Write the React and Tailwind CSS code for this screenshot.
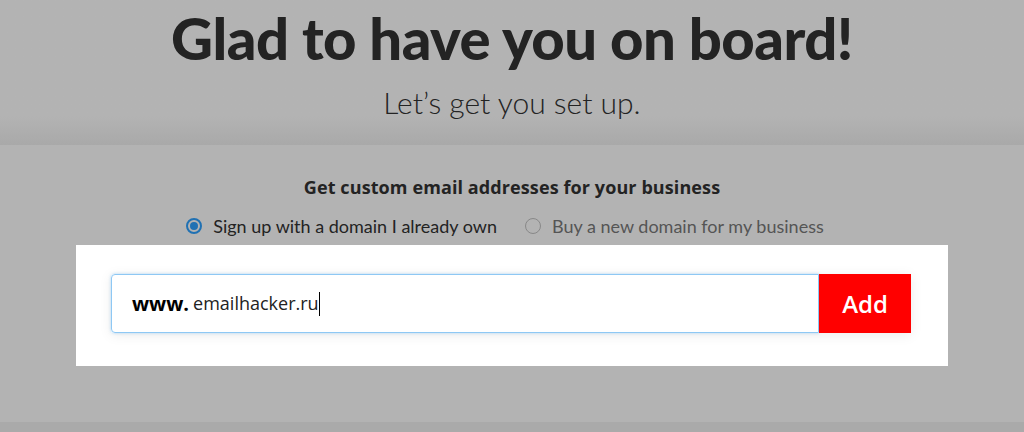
export default function App() {
  return (
    <div className="w-[1024px] h-[432px] overflow-hidden bg-[#b3b3b3] text-[#232323] font-['Lato','Open_Sans',sans-serif]">
      {/* Header */}
      <div className="h-[145px] flex flex-col items-center bg-gradient-to-b from-[#b3b3b3] from-80% to-[#a9a9a9]">
        <h1 className="mt-[6px] text-[58px] leading-[64px] font-black tracking-[-0.5px]">
          Glad to have you on board!
        </h1>
        <p className="mt-[15px] text-[30px] leading-[34px] font-light">
          Let’s get you set up.
        </p>
      </div>

      {/* Form */}
      <div className="h-[277px] flex flex-col items-center">
        <h2 className="mt-[31px] text-[18px] leading-[22px] font-bold font-['Open_Sans',sans-serif] tracking-[0.1px]">
          Get custom email addresses for your business
        </h2>
        <div className="mt-[17px] flex items-center gap-[28px] text-[18px] leading-[22px]">
          <label className="flex items-center gap-[11px] ml-[-14px]">
            <span className="w-[16px] h-[16px] rounded-full border-2 border-[#2071b3] flex items-center justify-center">
              <span className="w-[8px] h-[8px] rounded-full bg-[#2071b3]" />
            </span>
            <span>Sign up with a domain I already own</span>
          </label>
          <label className="flex items-center gap-[11px] text-[#555]">
            <span className="w-[16px] h-[16px] rounded-full border border-[#888]" />
            <span>Buy a new domain for my business</span>
          </label>
        </div>
        <div className="mt-[8px] w-[872px] h-[121px] bg-white flex items-start pt-[29px] px-[35px]">
          <div className="flex w-[800px] h-[59px] shadow-[0_2px_12px_rgba(0,0,0,0.08)]">
            <div className="flex-1 flex items-center border border-[#8ec8f4] rounded-l-[4px] shadow-[0_0_3px_rgba(100,180,240,0.5)] px-[20px] font-['Open_Sans',sans-serif]">
              <span className="text-[20px] font-bold text-black">www.</span>
              <span className="ml-[4px] text-[18px] text-[#222]">emailhacker.ru</span>
              <span className="w-px h-[24px] bg-black" />
            </div>
            <button className="w-[92px] bg-[#ff0000] text-white text-[24px] font-semibold font-['Open_Sans',sans-serif]">
              Add
            </button>
          </div>
        </div>
      </div>
      <div className="h-[10px] bg-[#aaaaaa]" />
    </div>
  )
}
